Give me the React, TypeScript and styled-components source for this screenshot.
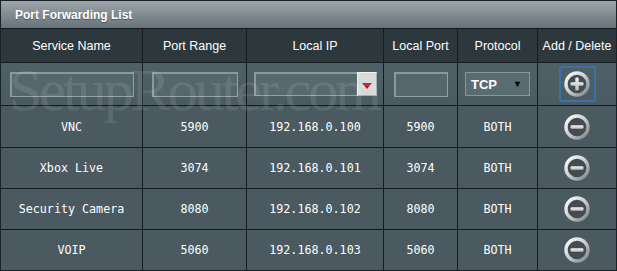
import React from "react";
import styled, { createGlobalStyle } from "styled-components";

const GlobalStyle = createGlobalStyle`
  html, body {
    margin: 0;
    padding: 0;
    background: #1b2226;
  }
  body {
    font-family: "Liberation Sans", Arial, sans-serif;
  }
`;

const rules = [
  { name: "VNC", range: "5900", ip: "192.168.0.100", port: "5900", proto: "BOTH" },
  { name: "Xbox Live", range: "3074", ip: "192.168.0.101", port: "3074", proto: "BOTH" },
  { name: "Security Camera", range: "8080", ip: "192.168.0.102", port: "8080", proto: "BOTH" },
  { name: "VOIP", range: "5060", ip: "192.168.0.103", port: "5060", proto: "BOTH" },
];

const headers = ["Service Name", "Port Range", "Local IP", "Local Port", "Protocol", "Add / Delete"];

const RoundIcon = ({ kind }: { kind: "add" | "remove" }) => (
  <svg width="28" height="28" viewBox="0 0 28 28">
    <defs>
      <linearGradient id={`ring-${kind}`} x1="0" y1="0" x2="1" y2="1">
        <stop offset="0" stopColor="#ffffff" />
        <stop offset="0.5" stopColor="#c9cccd" />
        <stop offset="1" stopColor="#7d8386" />
      </linearGradient>
      <linearGradient id={`bar-${kind}`} x1="0" y1="0" x2="0" y2="1">
        <stop offset="0" stopColor="#f4f4f4" />
        <stop offset="1" stopColor="#b9bdbf" />
      </linearGradient>
    </defs>
    <circle cx="14" cy="14" r="11" fill="#434d51" stroke={`url(#ring-${kind})`} strokeWidth="3.4" />
    <rect x="7.5" y="12.3" width="13" height="3.4" rx="1.2" fill={`url(#bar-${kind})`} />
    {kind === "add" && (
      <rect x="12.3" y="7.5" width="3.4" height="13" rx="1.2" fill={`url(#bar-${kind})`} />
    )}
  </svg>
);

const App = () => {
  return (
    <>
      <GlobalStyle />
      <Panel>
        <Title>Port Forwarding List</Title>
        {headers.map((h) => (
          <HeadCell key={h}>{h}</HeadCell>
        ))}

        <InputCell>
          <TextField $width={124} />
        </InputCell>
        <InputCell>
          <TextField $width={86} />
        </InputCell>
        <InputCell>
          <Combo>
            <ComboField />
            <ComboButton>
              <RedArrow />
            </ComboButton>
          </Combo>
        </InputCell>
        <InputCell>
          <TextField $width={54} />
        </InputCell>
        <InputCell>
          <Protocol>
            TCP
            <DarkArrow>▼</DarkArrow>
          </Protocol>
        </InputCell>
        <InputCell>
          <AddButton>
            <RoundIcon kind="add" />
          </AddButton>
        </InputCell>

        {rules.map((r) => (
          <React.Fragment key={r.name}>
            <DataCell>{r.name}</DataCell>
            <DataCell>{r.range}</DataCell>
            <DataCell>{r.ip}</DataCell>
            <DataCell>{r.port}</DataCell>
            <DataCell>{r.proto}</DataCell>
            <DataCell>
              <RoundIcon kind="remove" />
            </DataCell>
          </React.Fragment>
        ))}

        <Watermark>SetupRouter.com</Watermark>
      </Panel>
    </>
  );
};

export default App;

const Panel = styled.div`
  position: relative;
  width: 617px;
  height: 271px;
  box-sizing: border-box;
  border: 1px solid #1b2226;
  background: #151b1e;
  display: grid;
  grid-template-columns: 141px 103px 136px 73px 79px 78px;
  grid-template-rows: 27px 33px 42px 41px 40px 40px 40px;
  gap: 1px;
  overflow: hidden;
`;

const Title = styled.div`
  grid-column: 1 / -1;
  display: flex;
  align-items: center;
  padding-left: 14px;
  background: linear-gradient(#9ca6aa, #848f94 45%, #66737a);
  color: #ffffff;
  font-size: 12px;
  font-weight: bold;
  text-shadow: 0 1px 1px rgba(0, 0, 0, 0.35);
`;

const HeadCell = styled.div`
  display: flex;
  align-items: center;
  justify-content: center;
  background: #2d383d;
  color: #ffffff;
  font-size: 12.5px;
`;

const InputCell = styled.div`
  display: flex;
  align-items: center;
  justify-content: center;
  background: linear-gradient(#4f6066, #4a5b61);
`;

const TextField = styled.input<{ $width: number }>`
  box-sizing: border-box;
  width: ${({ $width }) => $width}px;
  height: 25px;
  margin: 0;
  padding: 0 4px;
  background: #55666c;
  border: 1px solid #95a0a3;
  border-top: 2px solid #8d989b;
  border-left: 2px solid #8d989b;
  outline: none;
`;

const Combo = styled.div`
  display: flex;
  width: 123px;
  height: 24px;
  box-sizing: border-box;
`;

const ComboField = styled.div`
  flex: 1;
  background: #57686e;
  border: 1px solid #95a0a3;
  border-top: 2px solid #8d989b;
  border-left: 2px solid #8d989b;
  border-right: none;
`;

const ComboButton = styled.div`
  width: 20px;
  display: flex;
  align-items: center;
  justify-content: center;
  background: #d6dadb;
  border: 1px solid #f0f1f1;
  border-right-color: #a8aeb0;
  border-bottom-color: #a8aeb0;
  box-sizing: border-box;
`;

const RedArrow = styled.span`
  width: 0;
  height: 0;
  margin-top: 3px;
  border-left: 5px solid transparent;
  border-right: 5px solid transparent;
  border-top: 6px solid #c8101a;
`;

const Protocol = styled.div`
  box-sizing: border-box;
  width: 65px;
  height: 24px;
  display: flex;
  align-items: center;
  justify-content: space-between;
  padding: 0 7px 0 5px;
  background: #5a6c72;
  border: 1px solid #8a9599;
  color: #ffffff;
  font-size: 13px;
  font-weight: bold;
`;

const DarkArrow = styled.span`
  color: #000000;
  font-size: 9px;
`;

const AddButton = styled.div`
  box-sizing: border-box;
  width: 37px;
  height: 36px;
  display: flex;
  align-items: center;
  justify-content: center;
  border: 2px solid #3d6fa8;
  border-radius: 2px;
`;

const DataCell = styled.div`
  display: flex;
  align-items: center;
  justify-content: center;
  background: #4a5a60;
  color: #ffffff;
  font-family: "DejaVu Sans Mono", "Liberation Mono", monospace;
  font-size: 11.7px;
  white-space: pre;
`;

const Watermark = styled.div`
  position: absolute;
  left: 8px;
  top: 65px;
  font-family: "Liberation Serif", "Times New Roman", serif;
  font-size: 60px;
  letter-spacing: -3px;
  line-height: 48px;
  color: rgba(255, 255, 255, 0.1);
  pointer-events: none;
  white-space: nowrap;
`;
